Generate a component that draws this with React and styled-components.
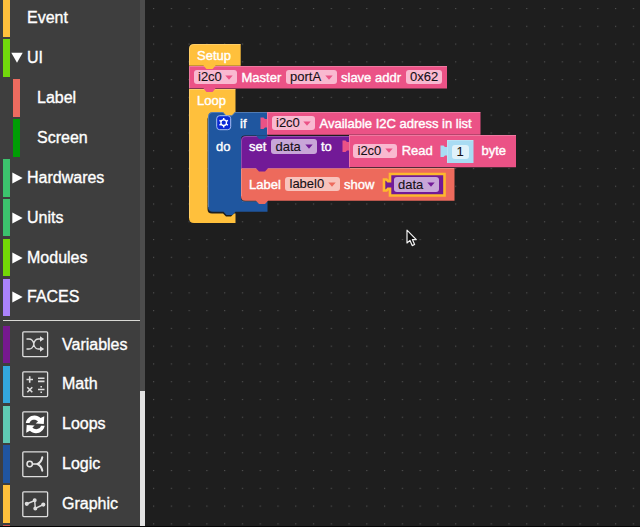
import React from 'react';
import styled, { createGlobalStyle } from 'styled-components';

const GlobalStyle = createGlobalStyle`
  * { box-sizing: border-box; }
  body {
    margin: 0;
    background: #1e1e1e;
    font-family: "Liberation Sans", Arial, sans-serif;
    overflow: hidden;
  }
`;

const color = {
  event: '#ffc03c',
  i2c: '#eb5286',
  logic: '#1f569f',
  variable: '#721a97',
  label: '#ed6a5c',
  number: '#a9dcf3',
};

const Editor = styled.div`
  display: flex;
  width: 640px;
  height: 527px;
  overflow: hidden;
  border-bottom: 1px solid #050505;
`;

const Sidebar = styled.nav`
  display: flex;
  flex: none;
  width: 145px;
  background: #3e3e3e;
`;

const Categories = styled.div`
  width: 140px;
  flex: none;
  height: 526px;
  overflow: hidden;
  padding-left: 3px;
`;

const Category = styled.div`
  display: flex;
  align-items: center;
  height: 37.6px;
  margin: ${(p) => p.$top || 0}px 0 2.3px ${(p) => (p.$nested ? 10 : 0)}px;
  border-left: 7px solid ${(p) => p.$color};
  color: #fff;
  font-size: 16px;
  -webkit-text-stroke: 0.35px #fff;
  white-space: nowrap;
`;

const Lead = styled.span`
  display: flex;
  align-items: center;
  flex: none;
  width: ${(p) => p.$w}px;
  padding-left: ${(p) => p.$pad || 0}px;
`;

const Divider = styled.div`
  height: 1px;
  margin-top: 3.6px;
  background: #d8d8d4;
`;

const ScrollTrack = styled.div`
  display: flex;
  flex-direction: column;
  justify-content: flex-end;
  width: 5px;
  background: #4c4c4c;
`;

const ScrollThumb = styled.div`
  height: 135px;
  background: #e2e2e2;
`;

const Workspace = styled.main`
  position: relative;
  flex: 1;
  background-color: #1e1e1e;
`;

const GridDots = styled.svg`
  display: block;
`;

const Block = styled.div`
  position: absolute;
  left: ${(p) => p.$x - 145}px;
  top: ${(p) => p.$y}px;
`;

const Shape = styled.svg`
  position: absolute;
  left: 0;
  top: 0;
  width: 1px;
  height: 1px;
  overflow: visible;
`;

const Line = styled.div`
  position: relative;
  display: flex;
  align-items: center;
  gap: 4.5px;
  height: ${(p) => p.$h || 22}px;
  padding-left: ${(p) => p.$pad}px;
  color: #fff;
  font-size: 13px;
  -webkit-text-stroke: 0.4px #fff;
`;

const Word = styled.span`
  flex: none;
  width: ${(p) => p.$w}px;
  margin-left: ${(p) => p.$shift || 0}px;
  white-space: nowrap;
`;

const FieldBox = styled.span`
  display: flex;
  flex: none;
  align-items: center;
  justify-content: space-between;
  width: ${(p) => p.$w}px;
  height: 14.5px;
  padding: 0 4px 0 4.5px;
  border-radius: 3px;
  background: ${(p) => p.$tint};
  color: #151015;
  -webkit-text-stroke: 0.1px #151015;
  line-height: 14px;
`;

const Cursor = styled.svg`
  position: absolute;
  left: 261px;
  top: 229px;
`;

function Field({ w, tint, arrow, children }) {
  return (
    <FieldBox $w={w} $tint={tint}>
      {children}
      {arrow && (
        <svg width="8" height="5" viewBox="0 0 8 5">
          <path d="M0.3 0.5H7.7L4 4.8Z" fill={arrow} />
        </svg>
      )}
    </FieldBox>
  );
}

function BlockShape({ d, fill, edge }) {
  return (
    <Shape>
      <path d={d} fill={fill} />
      {edge && <path d={edge} fill="none" stroke="#fff" strokeOpacity="0.22" strokeWidth="1" />}
    </Shape>
  );
}

function Arrow({ open }) {
  return (
    <svg width="13" height="12" viewBox="0 0 13 12">
      <path d={open ? 'M1.3 0.8H12.7L7 10.8Z' : 'M2.3 0.5L12.7 6L2.3 11.5Z'} fill="#fff" />
    </svg>
  );
}

const glyphs = {
  variables: (
    <g fill="none" stroke="#dedede" strokeWidth="1.3">
      <path d="M4.5 8H7C9.5 8 11.2 9.8 11.8 13C12.4 16.5 14 18 16.5 18H19M4.5 18H7C9.5 18 11.2 16.2 11.8 13C12.4 9.5 14 8 16.5 8H19" />
      <path d="M18 5.3L22.2 8L18 10.7ZM18 15.3L22.2 18L18 20.7Z" fill="#dedede" stroke="none" />
    </g>
  ),
  math: (
    <g fill="none" stroke="#dedede" strokeWidth="1.6">
      <path d="M4.5 8.5H11M7.7 5.2V11.8M16 7.2H22.5M16 10.4H22.5M5.3 16.2L10.3 21.2M10.3 16.2L5.3 21.2M16 18.5H22.5" />
      <path d="M19.2 15V16.6M19.2 20.4V22" />
    </g>
  ),
  loops: (
    <g fill="#fff">
      <path d="M3.8 12C4.4 7.5 8.2 4.3 12.6 4.4C15 4.5 17 5.4 18.6 7L22.3 5.3L21.8 13L13.7 12.6L16 10.4C14.5 8.8 12 8.3 9.8 9.2C8.6 9.8 7.9 10.7 7.5 12Z" />
      <path d="M22.7 14.7C22 19 18.2 22.3 13.9 22.2C11.5 22.1 9.5 21.3 7.9 19.7L4.2 21.7L4.7 14L12.7 14.4L10.4 16.6C12 18.2 14.4 18.6 16.5 17.6C17.8 17 18.5 16.2 19 14.7Z" />
    </g>
  ),
  logic: (
    <g fill="none" stroke="#e6e6e6" strokeWidth="2" strokeLinecap="round" strokeLinejoin="round">
      <circle cx="7.7" cy="13" r="2.7" strokeWidth="1.5" />
      <path d="M10.8 13H15.5" strokeWidth="1.4" />
      <path d="M20.3 6.3C19.7 9.5 18.3 11.8 15.5 13C18.3 14.2 19.7 16.5 20.3 19.7" />
    </g>
  ),
  graphic: (
    <g fill="#dedede" stroke="#dedede" strokeWidth="1.4">
      <path d="M4.5 13L12.7 9.5L13.3 17.5L21.5 13.5" fill="none" />
      <circle cx="4.8" cy="12.8" r="1.4" />
      <circle cx="12.7" cy="9.2" r="1.3" />
      <circle cx="13.3" cy="17.5" r="1.3" />
      <circle cx="21.3" cy="13.6" r="1.4" />
    </g>
  ),
};

function BoxIcon({ name }) {
  return (
    <svg width="27" height="27" viewBox="0 0 27 27">
      <rect x="0.8" y="0.8" width="24.8" height="24.8" rx="1" fill="none" stroke="#dedede" strokeWidth="1.3" />
      {glyphs[name]}
    </svg>
  );
}

const groups = [
  { name: 'UI', color: '#72d80c', open: true },
  { name: 'Label', color: '#ed6b5f', nested: true },
  { name: 'Screen', color: '#009d05', nested: true },
  { name: 'Hardwares', color: '#3cc36d' },
  { name: 'Units', color: '#3cc36d' },
  { name: 'Modules', color: '#73d906' },
  { name: 'FACES', color: '#ab83fb' },
];

const tools = [
  { name: 'Variables', color: '#76198f', icon: 'variables' },
  { name: 'Math', color: '#33a8df', icon: 'math' },
  { name: 'Loops', color: '#5fcbb5', icon: 'loops' },
  { name: 'Logic', color: '#2055a0', icon: 'logic' },
  { name: 'Graphic', color: '#ffc13c', icon: 'graphic' },
];

const pinkTint = '#f9b9d0';
const coralTint = '#f8c3bc';
const purpleTint = '#c8a6d8';

const outputTab = 'V15.5H-2L-3.5 17H-6.5V5.5H-3.5L-2 7H0Z';

export default function App() {
  return (
    <Editor>
      <GlobalStyle />
      <Sidebar>
        <Categories>
          <Category $color="#ffc03c" $top={-0.6}>
            <Lead $w={17} />
            Event
          </Category>
          {groups.map((g) => (
            <Category key={g.name} $color={g.color} $nested={g.nested}>
              <Lead $w={17}>{!g.nested && <Arrow open={g.open} />}</Lead>
              {g.name}
            </Category>
          ))}
          <Divider />
          {tools.map((t, i) => (
            <Category key={t.name} $color={t.color} $top={i === 0 ? 4.9 : 0}>
              <Lead $w={52} $pad={11.5}>
                <BoxIcon name={t.icon} />
              </Lead>
              {t.name}
            </Category>
          ))}
          <Category $color="#c94b4b" />
        </Categories>
        <ScrollTrack>
          <ScrollThumb />
        </ScrollTrack>
      </Sidebar>
      <Workspace>
        <GridDots width="495" height="526">
          <defs>
            <pattern id="dots" x="8" y="8" width="17.77" height="17.77" patternUnits="userSpaceOnUse">
              <rect width="1.2" height="1.1" fill="#515151" />
            </pattern>
          </defs>
          <rect width="495" height="526" fill="url(#dots)" />
        </GridDots>

        <Block $x={189} $y={89}>
          <BlockShape
            fill={color.event}
            d="M0 0H46.5V27H23Q18.5 27 18.5 30V120Q18.5 124.5 23 124.5H34L37 127.5H42L45 124.5H46.5V134H5Q0 134 0 129Z"
            edge="M0.5 129V0.5H46.5"
          />
          <Line $pad={8}>
            <Word $w={34}>Loop</Word>
          </Line>
        </Block>

        <Block $x={189} $y={66}>
          <BlockShape
            fill={color.i2c}
            d="M0 0H258V22.6H26.5L23.5 26H17.5L14.5 22.6H0Z"
            edge="M0.5 22.5V0.5H258"
          />
          <Line $pad={4.5}>
            <Field w={43.5} tint={pinkTint} arrow={color.i2c}>i2c0</Field>
            <Word $w={39.5}>Master</Word>
            <Field w={51} tint={pinkTint} arrow={color.i2c}>portA</Field>
            <Word $w={60}>slave addr</Word>
            <Field w={36.5} tint={pinkTint}>0x62</Field>
          </Line>
        </Block>

        <Block $x={189} $y={44}>
          <BlockShape
            fill={color.event}
            d="M5 0H51.7V21.7H26.5L23.5 25H17.5L14.5 21.7H0V5Q0 0 5 0Z"
            edge="M0.5 21V5Q0.5 0.5 5 0.5H51.5"
          />
          <Line $pad={8}>
            <Word $w={38}>Setup</Word>
          </Line>
        </Block>

        <Block $x={207.5} $y={112}>
          <BlockShape
            fill={color.logic}
            d="M5 0H15L18 3.3H24L27 0H59.5V23.5H37Q33 23.5 33 27.5V85.5Q33 89.5 37 89.5H59.5V99.8H27.5L24.5 103H18.5L15.5 99.8H5Q0 99.8 0 95V5Q0 0 5 0Z"
            edge="M0.5 95V5Q0.5 0.5 5 0.5H15L18 3.8H24L27 0.5H59.5M34 89H59"
          />
          <Line $pad={8}>
            <svg width="16" height="16" viewBox="0 0 16 16">
              <rect x="0.7" y="0.7" width="14" height="14" rx="3" fill="#0b2ad6" stroke="#a9c0ee" strokeWidth="1" />
              <circle cx="7.7" cy="7.7" r="2.8" fill="none" stroke="#fff" strokeWidth="1.3" />
              <path
                d="M7.7 2.9V4.9M7.7 10.5V12.5M3.5 5.3L5.2 6.3M10.2 9.1L11.9 10.1M3.5 10.1L5.2 9.1M10.2 6.3L11.9 5.3"
                stroke="#fff"
                strokeWidth="1.5"
              />
            </svg>
            <Word $w={12} $shift={4}>if</Word>
          </Line>
          <Line $pad={8.5} $h={24}>
            <Word $w={20}>do</Word>
          </Line>
        </Block>

        <Block $x={240.5} $y={168}>
          <BlockShape
            fill={color.label}
            d="M0 0H213.5V32.7H27L24 36H18L15 32.7H4.5Q0 32.7 0 28.5Z"
            edge="M0.5 28V0.5H213.5"
          />
          <Line $pad={8.5} $h={32}>
            <Word $w={31.5}>Label</Word>
            <Field w={54.5} tint={coralTint} arrow={color.label}>label0</Field>
            <Word $w={32}>show</Word>
          </Line>
        </Block>

        <Block $x={240.5} $y={135.5}>
          <BlockShape
            fill={color.variable}
            d="M5 0H109V32.3H27L24 35.5H18L15 32.3H0V5Q0 0 5 0Z"
            edge="M0.5 32V5Q0.5 0.5 5 0.5H108"
          />
          <Shape>
            <path d="M15 -0.5L18 3H24L27 -0.5Z" fill={color.logic} />
          </Shape>
          <Line $pad={8.5}>
            <Word $w={17.5}>set</Word>
            <Field w={45.5} tint={purpleTint} arrow={color.variable}>data</Field>
            <Word $w={12}>to</Word>
          </Line>
        </Block>

        <Block $x={267} $y={112}>
          <BlockShape
            fill={color.i2c}
            d={`M0 0H213.5V22.7H0${outputTab}`}
            edge="M0.5 22V0.5H213.5"
          />
          <Line $pad={4.5}>
            <Field w={43.5} tint={pinkTint} arrow={color.i2c}>i2c0</Field>
            <Word $w={155}>Available I2C adress in list</Word>
          </Line>
        </Block>

        <Block $x={348.5} $y={135.3}>
          <BlockShape
            fill={color.i2c}
            d={`M0 0H167V32.2H0${outputTab}`}
            edge="M0.5 32V0.5H167"
          />
          <Line $pad={4.5} $h={31}>
            <Field w={43.5} tint={pinkTint} arrow={color.i2c}>i2c0</Field>
            <Word $w={75} $shift={0.7}>Read</Word>
            <Word $w={28} $shift={0.3}>byte</Word>
          </Line>
        </Block>

        <Block $x={447} $y={140.3}>
          <BlockShape
            fill={color.number}
            d={`M0 0H26.5V23H0${outputTab}`}
            edge="M0.5 22.5V0.5H26"
          />
          <Line $pad={5} $h={23}>
            <Field w={16.5} tint="#e0f2fa">1</Field>
          </Line>
        </Block>

        <Block $x={389.5} $y={173.5}>
          <Shape>
            <path
              d="M0 0H54.5V21.5H0V14.8H-2L-3.5 16.5H-6V5.5H-3.5L-2 7.2H0Z"
              fill={color.variable}
              stroke="#fdb82d"
              strokeWidth="2.6"
            />
          </Shape>
          <Line $pad={4}>
            <Field w={45.5} tint={purpleTint} arrow={color.variable}>data</Field>
          </Line>
        </Block>

        <Cursor width="12" height="19" viewBox="0 0 12 19">
          <path
            d="M1 1.2V14L4 11.4L6.2 16.6L8.6 15.5L6.4 10.6H10.3Z"
            fill="#101010"
            stroke="#f2f2f2"
            strokeWidth="1.2"
            strokeLinejoin="round"
          />
        </Cursor>
      </Workspace>
    </Editor>
  );
}
